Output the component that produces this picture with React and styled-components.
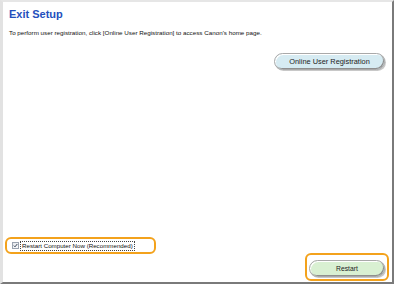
import React, { useState } from "react";
import styled, { createGlobalStyle } from "styled-components";

const GlobalStyle = createGlobalStyle`
  html, body {
    margin: 0;
    padding: 0;
    background: #ffffff;
  }
  body {
    font-family: "Liberation Sans", Arial, sans-serif;
  }
`;

const Frame = styled.div`
  box-sizing: border-box;
  width: 394px;
  height: 284px;
  display: flex;
  flex-direction: column;
  background: #ffffff;
  border-top: 2px solid #e6e6e6;
  border-left: 3px solid #e2e2e2;
  border-right: 2px solid #7a7a7a;
  border-bottom: 2px solid #7a7a7a;
  padding: 6px 0 0 6px;
`;

const Title = styled.h1`
  margin: 0;
  font-size: 11px;
  font-weight: bold;
  color: #2450bd;
  line-height: 13px;
`;

const Description = styled.p`
  margin: 8px 0 0 0;
  font-size: 6.25px;
  line-height: 8px;
  color: #111;
`;

const ButtonRow = styled.div`
  display: flex;
  justify-content: flex-end;
  padding-right: 7px;
  margin-top: 16px;
`;

const PillButton = styled.button`
  box-sizing: border-box;
  width: ${(p) => p.$width}px;
  height: 17px;
  border-radius: 9px;
  border: 1px solid #a9a9a9;
  background: ${(p) => p.$bg};
  box-shadow: inset -1px -1px 0 #8f8f8f, inset 1px 1px 0 #ffffff,
    1px 1px 0 #c8c8c8;
  font-family: "Liberation Sans", Arial, sans-serif;
  font-size: ${(p) => p.$size}px;
  color: #222;
  padding: 0;
  cursor: pointer;
`;

const Spacer = styled.div`
  flex: 1;
`;

const Footer = styled.div`
  display: flex;
  align-items: flex-end;
  justify-content: space-between;
  padding: 0 3px 1px 0;
  margin-left: -4px;
`;

const CheckRow = styled.label`
  box-sizing: border-box;
  display: flex;
  align-items: center;
  gap: 2px;
  width: 151px;
  height: 17px;
  padding-left: 5px;
  margin-bottom: 27px;
  border: 2px solid #f3a21c;
  border-radius: 6px;
  cursor: pointer;
`;

const Box = styled.span`
  box-sizing: border-box;
  width: 7px;
  height: 7px;
  border: 1px solid #9aa3b0;
  background: linear-gradient(135deg, #e4e7ec, #fafbfc);
  display: flex;
  align-items: center;
  justify-content: center;
`;

const CheckText = styled.span`
  font-size: 6.2px;
  line-height: 8px;
  color: #111;
  outline: 1px dotted #444;
  padding: 0 1px;
`;

const Highlight = styled.div`
  box-sizing: border-box;
  padding: 2px 2px;
  border: 2px solid #f3a21c;
  border-radius: 6px;
`;

export default function App() {
  const [checked, setChecked] = useState(true);
  return (
    <>
      <GlobalStyle />
      <Frame>
        <Title>Exit Setup</Title>
        <Description>
          To perform user registration, click [Online User Registration] to
          access Canon's home page.
        </Description>
        <ButtonRow>
          <PillButton $width={111} $bg="#d6ebf2" $size={7.4}>
            Online User Registration
          </PillButton>
        </ButtonRow>
        <Spacer />
        <Footer>
          <CheckRow onClick={() => setChecked(!checked)}>
            <Box>
              {checked && (
                <svg width="5" height="5" viewBox="0 0 5 5">
                  <path
                    d="M0.8 2.6 L2 3.8 L4.3 1"
                    fill="none"
                    stroke="#3a465a"
                    strokeWidth="1"
                  />
                </svg>
              )}
            </Box>
            <CheckText>Restart Computer Now (Recommended)</CheckText>
          </CheckRow>
          <Highlight>
            <PillButton $width={76} $bg="#d9f0d2" $size={6.8}>
              Restart
            </PillButton>
          </Highlight>
        </Footer>
      </Frame>
    </>
  );
}
